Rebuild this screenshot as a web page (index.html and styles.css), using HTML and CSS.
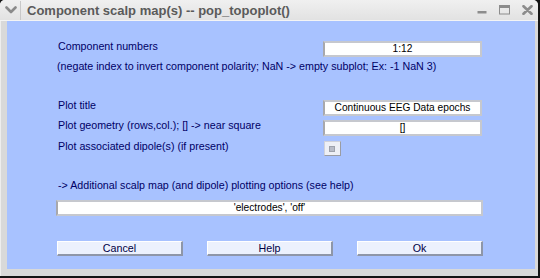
FILE: index.html
```html
<!DOCTYPE html>
<html>
<head>
<meta charset="utf-8">
<link rel="stylesheet" href="styles.css">
</head>
<body>
<div class="window">
  <div class="titlebar">
    <div class="menu-btn">
      <svg width="12" height="8" viewBox="0 0 12 8"><path d="M1.5 1.5 L6 6 L10.5 1.5" fill="none" stroke="#8a8a8a" stroke-width="2.6" stroke-linecap="round" stroke-linejoin="round"/></svg>
    </div>
    <div class="title">Component scalp map(s) -- pop_topoplot()</div>
    <div class="controls">
      <svg class="ctl" width="10" height="10" viewBox="0 0 10 10"><rect x="0.5" y="6" width="9" height="2.5" fill="#8c8c8c"/></svg>
      <svg class="ctl" width="11" height="10" viewBox="0 0 11 10"><rect x="0.5" y="0.5" width="10" height="8.5" fill="none" stroke="#8c8c8c" stroke-width="1"/><rect x="0.5" y="0.5" width="10" height="2.5" fill="#8c8c8c"/></svg>
      <svg class="ctl" width="11" height="10" viewBox="0 0 11 10"><path d="M1.5 1.2 L9.5 8.8 M9.5 1.2 L1.5 8.8" stroke="#8c8c8c" stroke-width="2.6" stroke-linecap="round"/></svg>
    </div>
  </div>
  <div class="content">
    <div class="row r1">
      <div class="label">Component numbers</div>
      <div class="field">1:12</div>
    </div>
    <div class="note">(negate index to invert component polarity; NaN -&gt; empty subplot; Ex: -1 NaN 3)</div>
    <div class="row r2">
      <div class="label">Plot title</div>
      <div class="field">Continuous EEG Data epochs</div>
    </div>
    <div class="row r3">
      <div class="label">Plot geometry (rows,col.); [] -&gt; near square</div>
      <div class="field">[]</div>
    </div>
    <div class="row r4">
      <div class="label">Plot associated dipole(s) (if present)</div>
      <div class="checkbox"><span class="tick"></span></div>
    </div>
    <div class="note2">-&gt; Additional scalp map (and dipole) plotting options (see help)</div>
    <div class="field wide">'electrodes', 'off'</div>
    <div class="buttons">
      <div class="btn">Cancel</div>
      <div class="btn">Help</div>
      <div class="btn">Ok</div>
    </div>
  </div>
</div>
</body>
</html>
```

FILE: styles.css
```css
html, body {
  margin: 0;
  padding: 0;
}
body {
  width: 540px;
  height: 278px;
  background: #141414;
  font-family: "Liberation Sans", Arial, sans-serif;
  overflow: hidden;
}
.window {
  width: 538px;
  height: 276px;
  box-sizing: border-box;
  background: #d9d9d9;
  border-radius: 5px 5px 0 0;
  padding: 0 3px 7px 6px;
  display: flex;
  flex-direction: column;
  border-left: 1px solid #eeeeee;
}
.titlebar {
  height: 21px;
  margin: 0 -3px 0 -7px;
  box-sizing: border-box;
  display: flex;
  align-items: center;
  background: linear-gradient(#f0f0f0, #e2e2e2);
  border-radius: 5px 5px 0 0;
  border-bottom: 1px solid #f4f4f4;
}
.menu-btn {
  width: 21px;
  height: 19px;
  display: flex;
  align-items: center;
  justify-content: center;
  border-right: 1px solid #c8c8c8;
  box-sizing: border-box;
  padding-left: 2px;
}
.title {
  margin-left: 6px;
  font-weight: bold;
  font-size: 13px;
  color: #5a5a5a;
  flex: 1;
  white-space: nowrap;
}
.controls {
  display: flex;
  align-items: center;
  gap: 12px;
  padding-right: 5px;
}
.ctl {
  display: block;
}
.content {
  flex: 1;
  background: #a8c2ff;
  padding: 20px 0 0 50px;
  color: #000066;
  font-size: 10.7px;
}
.row {
  display: flex;
  height: 16px;
}
.label {
  width: 266px;
  line-height: 13px;
  margin-top: -1px;
  padding-left: 1px;
  box-sizing: border-box;
  white-space: nowrap;
}
.field {
  width: 159px;
  height: 16px;
  box-sizing: border-box;
  background: #ffffff;
  border: 2px solid #c6c8ce;
  border-left-color: #a8a8ac;
  text-align: center;
  line-height: 12px;
  font-size: 10.2px;
  color: #000000;
  white-space: nowrap;
}
.note {
  margin-top: 3px;
  line-height: 13px;
  white-space: nowrap;
}
.r2 { margin-top: 27px; }
.r3 { margin-top: 4px; }
.r4 { margin-top: 5px; height: 15px; }
.checkbox {
  width: 17px;
  height: 15px;
  box-sizing: border-box;
  margin-left: 1px;
  background: #eef0f6;
  border: 1px solid #d0d2da;
  border-right-color: #9a9ca4;
  border-bottom-color: #9a9ca4;
  position: relative;
}
.tick {
  position: absolute;
  left: 4px;
  top: 4px;
  width: 4px;
  height: 4px;
  background: #b8bcc8;
  border: 1px solid #9ea2ac;
}
.note2 {
  margin-top: 23px;
  line-height: 13px;
  padding-left: 1px;
  white-space: nowrap;
}
.wide {
  width: 427px;
  margin-top: 8px;
  margin-left: -1px;
}
.buttons {
  display: flex;
  gap: 24px;
  margin-top: 25px;
}
.btn {
  width: 126px;
  height: 15px;
  box-sizing: border-box;
  background: #ecf1fd;
  border: 1px solid #ffffff;
  border-right: 2px solid #8e96a8;
  border-bottom: 2px solid #8e96a8;
  text-align: center;
  line-height: 12px;
  color: #000044;
}
```
